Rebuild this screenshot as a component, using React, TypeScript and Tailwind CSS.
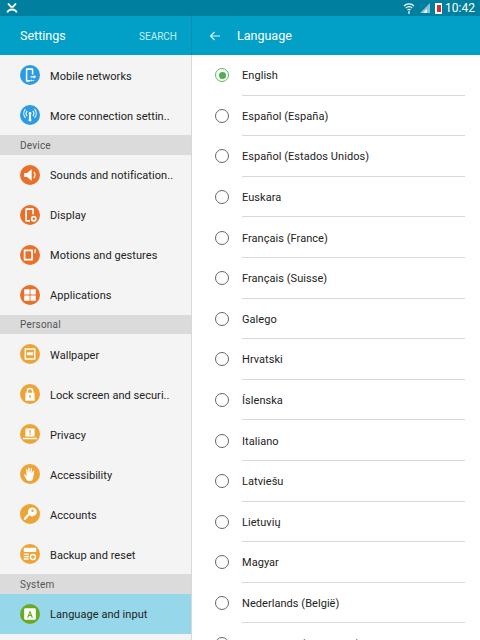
const font = { fontFamily: "Roboto, sans-serif" };

type Row = { label: string; color: string; icon: React.ReactNode; active?: boolean };

function Svg({ children }: { children: React.ReactNode }) {
  return (
    <svg viewBox="-2 -2 24 24" className="h-5 w-5" fill="#fff">
      {children}
    </svg>
  );
}

const blue = "bg-[#2b9be6]";
const orange = "bg-[#e8702a]";
const amber = "bg-[#eda336]";
const green = "bg-[#6aaa1e]";

const top: Row[] = [
  {
    label: "Mobile networks",
    color: blue,
    icon: (
      <Svg>
        <path d="M6 2h7a1 1 0 0 1 1 1v6.500h-1.800V4H6.800v12H10v2H6a1 1 0 0 1-1-1V3a1 1 0 0 1 1-1z" />
        <path d="M10.500 11.500h4V10l3 2.200-3 2.200v-1.400h-4zM15 15v1.200h-3V15l-2 1.600 2 1.600v-1h3z" />
      </Svg>
    ),
  },
  {
    label: "More connection settin..",
    color: blue,
    icon: (
      <Svg>
        <circle cx="10" cy="8.200" r="1.700" />
        <path d="M9.200 9h1.600l.9 8.500H8.300z" />
        <path d="M6.600 5a5 5 0 0 0 0 6.400M13.400 5a5 5 0 0 1 0 6.400M4.500 3a8 8 0 0 0 0 10.400M15.500 3a8 8 0 0 1 0 10.400" fill="none" stroke="#fff" strokeWidth="1.300" />
      </Svg>
    ),
  },
];

const device: Row[] = [
  {
    label: "Sounds and notification..",
    color: orange,
    icon: (
      <Svg>
        <path d="M3 7.500h3.500L12 3v14l-5.500-4.500H3z" />
        <path d="M14.500 6.500a5 5 0 0 1 0 7" fill="none" stroke="#fff" strokeWidth="1.600" />
      </Svg>
    ),
  },
  {
    label: "Display",
    color: orange,
    icon: (
      <Svg>
        <path d="M5.500 2h8a1.200 1.200 0 0 1 1.200 1.200V9h-2V4H6.300v12H10v2H5.500a1.200 1.200 0 0 1-1.200-1.200V3.200A1.200 1.200 0 0 1 5.500 2z" />
        <circle cx="14.500" cy="14.500" r="2.500" fill="none" stroke="#fff" strokeWidth="2" />
      </Svg>
    ),
  },
  {
    label: "Motions and gestures",
    color: orange,
    icon: (
      <Svg>
        <path d="M2.500 3.500h11v13h-11zM4.500 5.500v9h7v-9z" fillRule="evenodd" />
        <path d="M15.500 3l1.800.4-.9 4.400-1.300-.3z" />
      </Svg>
    ),
  },
  {
    label: "Applications",
    color: orange,
    icon: (
      <Svg>
        <rect x="3" y="3" width="6.500" height="6.500" rx="0.600" />
        <rect x="10.500" y="3" width="6.500" height="6.500" rx="0.600" />
        <rect x="3" y="10.500" width="6.500" height="6.500" rx="0.600" />
        <rect x="10.500" y="10.500" width="6.500" height="6.500" rx="0.600" />
      </Svg>
    ),
  },
];

const personal: Row[] = [
  {
    label: "Wallpaper",
    color: amber,
    icon: (
      <Svg>
        <path d="M3.500 3h13v14h-13zM5.300 4.800v10.400h9.400V4.800z" fillRule="evenodd" />
        <rect x="6.500" y="8" width="7" height="3.500" />
      </Svg>
    ),
  },
  {
    label: "Lock screen and securi..",
    color: amber,
    icon: (
      <Svg>
        <path d="M6.800 9V6.500a3.200 3.200 0 0 1 6.400 0V9" fill="none" stroke="#fff" strokeWidth="1.800" />
        <path d="M4.500 8.500h11V18h-11zM9.200 11.200v3.600h1.600v-3.600z" fillRule="evenodd" />
      </Svg>
    ),
  },
  {
    label: "Privacy",
    color: amber,
    icon: (
      <Svg>
        <path d="M4.500 3.500h11v9.500h-11zM9.200 5.200v4h1.600v-4zM9.200 10v1.500h1.600V10z" fillRule="evenodd" />
        <rect x="1.500" y="14.500" width="17" height="1.800" />
      </Svg>
    ),
  },
  {
    label: "Accessibility",
    color: amber,
    icon: (
      <Svg>
        <path d="M8.500 18.500c-1.800-.6-2.900-2.200-3.700-3.800L2.800 11.600c-.5-.9.700-1.700 1.400-.9l1.800 2L5.400 4.800c0-1 1.400-1 1.500 0l.7 4.500.3-6.500c0-1 1.500-1 1.600 0l.3 6.400L11 3.600c.2-1 1.600-.8 1.500.2l-.6 5.800 1.700-3.400c.5-.9 1.700-.3 1.400.6L13.700 15.500c-.5 2.200-2.700 3.600-5.200 3z" />
      </Svg>
    ),
  },
  {
    label: "Accounts",
    color: amber,
    icon: (
      <Svg>
        <path d="M11 2.500a5.300 5.300 0 1 1-1.700 9L5.200 16.500l-2.700.7.500-2.700 5-5.300A5.300 5.300 0 0 1 11 2.500zm2 2.200a1.500 1.500 0 1 0 0 3 1.500 1.500 0 0 0 0-3z" fillRule="evenodd" />
      </Svg>
    ),
  },
  {
    label: "Backup and reset",
    color: amber,
    icon: (
      <Svg>
        <rect x="2.500" y="2.500" width="15" height="5" rx="0.800" />
        <rect x="2.500" y="9.500" width="6" height="1.700" />
        <rect x="2.500" y="12.300" width="6" height="1.700" />
        <rect x="2.500" y="15.100" width="6" height="1.700" />
        <circle cx="13.500" cy="13.500" r="3" fill="none" stroke="#fff" strokeWidth="1.700" />
      </Svg>
    ),
  },
];

const system: Row[] = [
  {
    label: "Language and input",
    color: green,
    active: true,
    icon: (
      <svg viewBox="-2 -2 24 24" className="h-5 w-5">
        <rect x="3" y="3" width="14" height="14" rx="1.500" fill="#fff" />
        <path d="M10 5.500l3.600 9H12l-.7-2H8.700l-.7 2H6.400zm0 3L9.200 11h1.600z" fill="#6aaa1e" fillRule="evenodd" />
      </svg>
    ),
  },
];

const languages = [
  "English",
  "Español (España)",
  "Español (Estados Unidos)",
  "Euskara",
  "Français (France)",
  "Français (Suisse)",
  "Galego",
  "Hrvatski",
  "Íslenska",
  "Italiano",
  "Latviešu",
  "Lietuvių",
  "Magyar",
  "Nederlands (België)",
  "Nederlands (Nederland)",
];

function SettingRow({ row }: { row: Row }) {
  return (
    <div className={`flex h-10 shrink-0 items-center gap-2.5 pl-5 ${row.active ? "bg-[#96d8ea]" : ""}`}>
      <div className={`flex h-5 w-5 shrink-0 items-center justify-center rounded-full ${row.color}`}>{row.icon}</div>
      <span className="whitespace-nowrap pt-0.5 text-[11px] leading-none tracking-[0.05px] text-[#222]">{row.label}</span>
    </div>
  );
}

function SectionHeader({ label }: { label: string }) {
  return (
    <div className="flex h-[19.500px] shrink-0 items-center bg-[#dbdbdb] pl-5 pt-0.5 text-[10px] leading-none tracking-[0.2px] text-[#555]">
      {label}
    </div>
  );
}

export default function App() {
  return (
    <div className="flex h-[640px] w-[480px] flex-col overflow-hidden bg-white" style={font}>
      {/* status bar */}
      <div className="flex h-4 shrink-0 items-center justify-between bg-[#007f9e] pl-1.5 pr-[5px]">
        <svg viewBox="0 0 12 10" className="h-[10px] w-[12px]" fill="none" stroke="#fff" strokeWidth="1.800">
          <path d="M2 0.500l3 3.300h2l3-3.300M1.200 9.500c1-2.300 2.500-3 4.800-3s3.800.7 4.800 3" />
        </svg>
        <div className="flex items-center">
          <svg viewBox="0 0 12 12" className="mr-[5px] h-3 w-3" fill="none" stroke="#fff" strokeWidth="1.200">
            <path d="M1 4a7 7 0 0 1 10 0M2.800 6a4.500 4.500 0 0 1 6.400 0M4.500 8a2.200 2.200 0 0 1 3 0" />
            <path d="M6 9v3" />
          </svg>
          <svg viewBox="0 0 10 10" className="mr-[5px] h-[10px] w-[10px]">
            <path d="M0 10L10 0v10z" fill="#8cc3d2" />
            <path d="M3 10L7 6v4z" fill="#fff" />
          </svg>
          <div className="mr-[3px] flex h-[11px] w-[7px] items-center justify-center bg-white">
            <div className="h-[7px] w-[4px] bg-[#d32f2f]" />
          </div>
          <span className="text-[12px] leading-none text-white">10:42</span>
        </div>
      </div>

      {/* app bar */}
      <div className="flex h-[39px] shrink-0 items-center bg-[#02a0c6]">
        <div className="flex h-full w-[192px] shrink-0 items-center justify-between border-r border-[#0390b3] pl-5 pr-[14px] pt-0.5">
          <span className="text-[12.500px] leading-none text-white">Settings</span>
          <span className="text-[10px] leading-none text-[#c4eef8]">SEARCH</span>
        </div>
        <svg viewBox="0 0 12 12" className="ml-[17px] h-3 w-3" fill="none" stroke="#d6f3fa" strokeWidth="1.100">
          <path d="M11 6H1.500M5.500 2L1.500 6l4 4" />
        </svg>
        <span className="ml-[16px] pt-0.5 text-[12.500px] leading-none text-white">Language</span>
      </div>

      <div className="flex min-h-0 flex-1">
        {/* settings list */}
        <div className="flex w-[192px] shrink-0 flex-col overflow-hidden border-r border-[#d8d8d8] bg-[#f4f4f4]">
          {top.map((row) => (
            <SettingRow key={row.label} row={row} />
          ))}
          <SectionHeader label="Device" />
          {device.map((row) => (
            <SettingRow key={row.label} row={row} />
          ))}
          <SectionHeader label="Personal" />
          {personal.map((row) => (
            <SettingRow key={row.label} row={row} />
          ))}
          <SectionHeader label="System" />
          {system.map((row) => (
            <SettingRow key={row.label} row={row} />
          ))}
        </div>

        {/* language list */}
        <div className="min-w-0 flex-1 overflow-hidden">
          {languages.map((lang, i) => (
            <div key={lang} className="flex h-[40.600px] items-center pl-[23px] pr-[15px]">
              <div className="mr-[13px] flex h-[14px] w-[14px] shrink-0 items-center justify-center">
                {i === 0 ? (
                  <div className="flex h-[14px] w-[14px] items-center justify-center rounded-full border-[1.500px] border-[#5cb860]">
                    <div className="h-[7px] w-[7px] rounded-full bg-[#4caf50]" />
                  </div>
                ) : (
                  <div className="h-[14px] w-[14px] rounded-full border-[1.500px] border-[#666]" />
                )}
              </div>
              <div className="flex h-full min-w-0 flex-1 items-center border-b border-[#d9d9d9] pt-0.5 text-[11px] leading-none tracking-[0.05px] text-[#222]">
                {lang}
              </div>
            </div>
          ))}
        </div>
      </div>
    </div>
  );
}
